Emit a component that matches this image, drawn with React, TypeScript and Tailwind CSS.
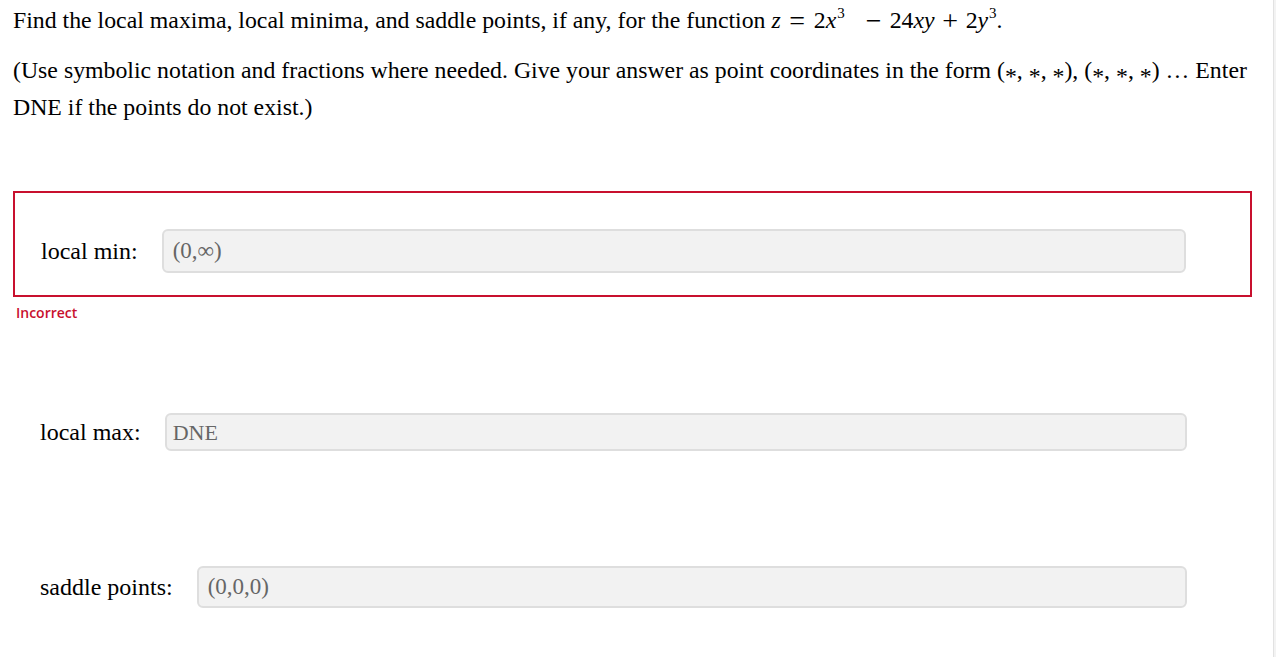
import React from 'react';

const serif = { fontFamily: '"Liberation Serif", "Times New Roman", serif' };

function Op({ children, w }: { children: React.ReactNode; w: string }) {
  return <span className={`inline-block text-center text-[28px] leading-none align-[-2px] ${w}`}>{children}</span>;
}

function Sup() {
  return <sup className="text-[15px] ml-[1px] align-[3px]">3</sup>;
}

function MathExpr() {
  return (
    <span className="whitespace-nowrap">
      <i>z</i>
      <Op w="w-[33px]">=</Op>
      2<i>x</i>
      <Sup />
      <span className="inline-block w-[13px]" />
      <Op w="w-[32px]">−</Op>
      24<i>xy</i>
      <Op w="w-[31px]">+</Op>
      2<i>y</i>
      <Sup />.
    </span>
  );
}

function Star() {
  return <span className="inline-block leading-none align-[-6px]">*</span>;
}

interface AnswerRowProps {
  label: string;
  value: string;
  height: string;
  valueClass: string;
}

function AnswerRow({ label, value, height, valueClass }: AnswerRowProps) {
  return (
    <div className="flex items-center gap-[24px]">
      <span className="text-[24px] text-black whitespace-nowrap">{label}</span>
      <div
        className={`flex-1 flex items-center ${height} ${valueClass} bg-[#f2f2f2] border-2 border-[#dedede] rounded-[6px] text-[#666]`}
      >
        {value}
      </div>
    </div>
  );
}

export default function App() {
  return (
    <div className="flex w-full h-[657px] bg-white overflow-hidden" style={serif}>
      <div className="flex-1 flex flex-col pl-[13px] pt-[2px]">
        <p className="h-[36px] text-[23.8px] leading-[36px] text-black whitespace-nowrap">
          Find the local maxima, local minima, and saddle points, if any, for the function <MathExpr />
        </p>
        <p className="mt-[14px] h-[72px] text-[23.8px] leading-[36px] text-black whitespace-nowrap">
          (Use symbolic notation and fractions where needed. Give your answer as point coordinates in the form (<Star />, <Star />, <Star />), (<Star />, <Star />, <Star />) … Enter
          <br />
          DNE if the points do not exist.)
        </p>

        <div className="mt-[67px] w-[1239px] border-2 border-[#c8102e] pt-[36px] pb-[22px] pl-[26px] pr-[64px]">
          <AnswerRow label="local min:" value="(0,∞)" height="h-[44px]" valueClass="pl-[9px] text-[23px]" />
        </div>
        <div
          className="mt-[6px] pl-[3px] text-[14px] leading-[20px] font-semibold text-[#c8102e]"
          style={{ fontFamily: '"Open Sans", "Noto Sans", sans-serif' }}
        >
          Incorrect
        </div>

        <div className="mt-[90px] pl-[27px] w-[1174px]">
          <AnswerRow label="local max:" value="DNE" height="h-[38px]" valueClass="pl-[6px] text-[22px]" />
        </div>

        <div className="mt-[115px] pl-[27px] w-[1174px]">
          <AnswerRow label="saddle points:" value="(0,0,0)" height="h-[42px]" valueClass="pl-[9px] text-[23px]" />
        </div>
      </div>
      <div className="w-[3px] bg-[#f3f3f3] border-l border-[#e2e2e2]" />
    </div>
  );
}
